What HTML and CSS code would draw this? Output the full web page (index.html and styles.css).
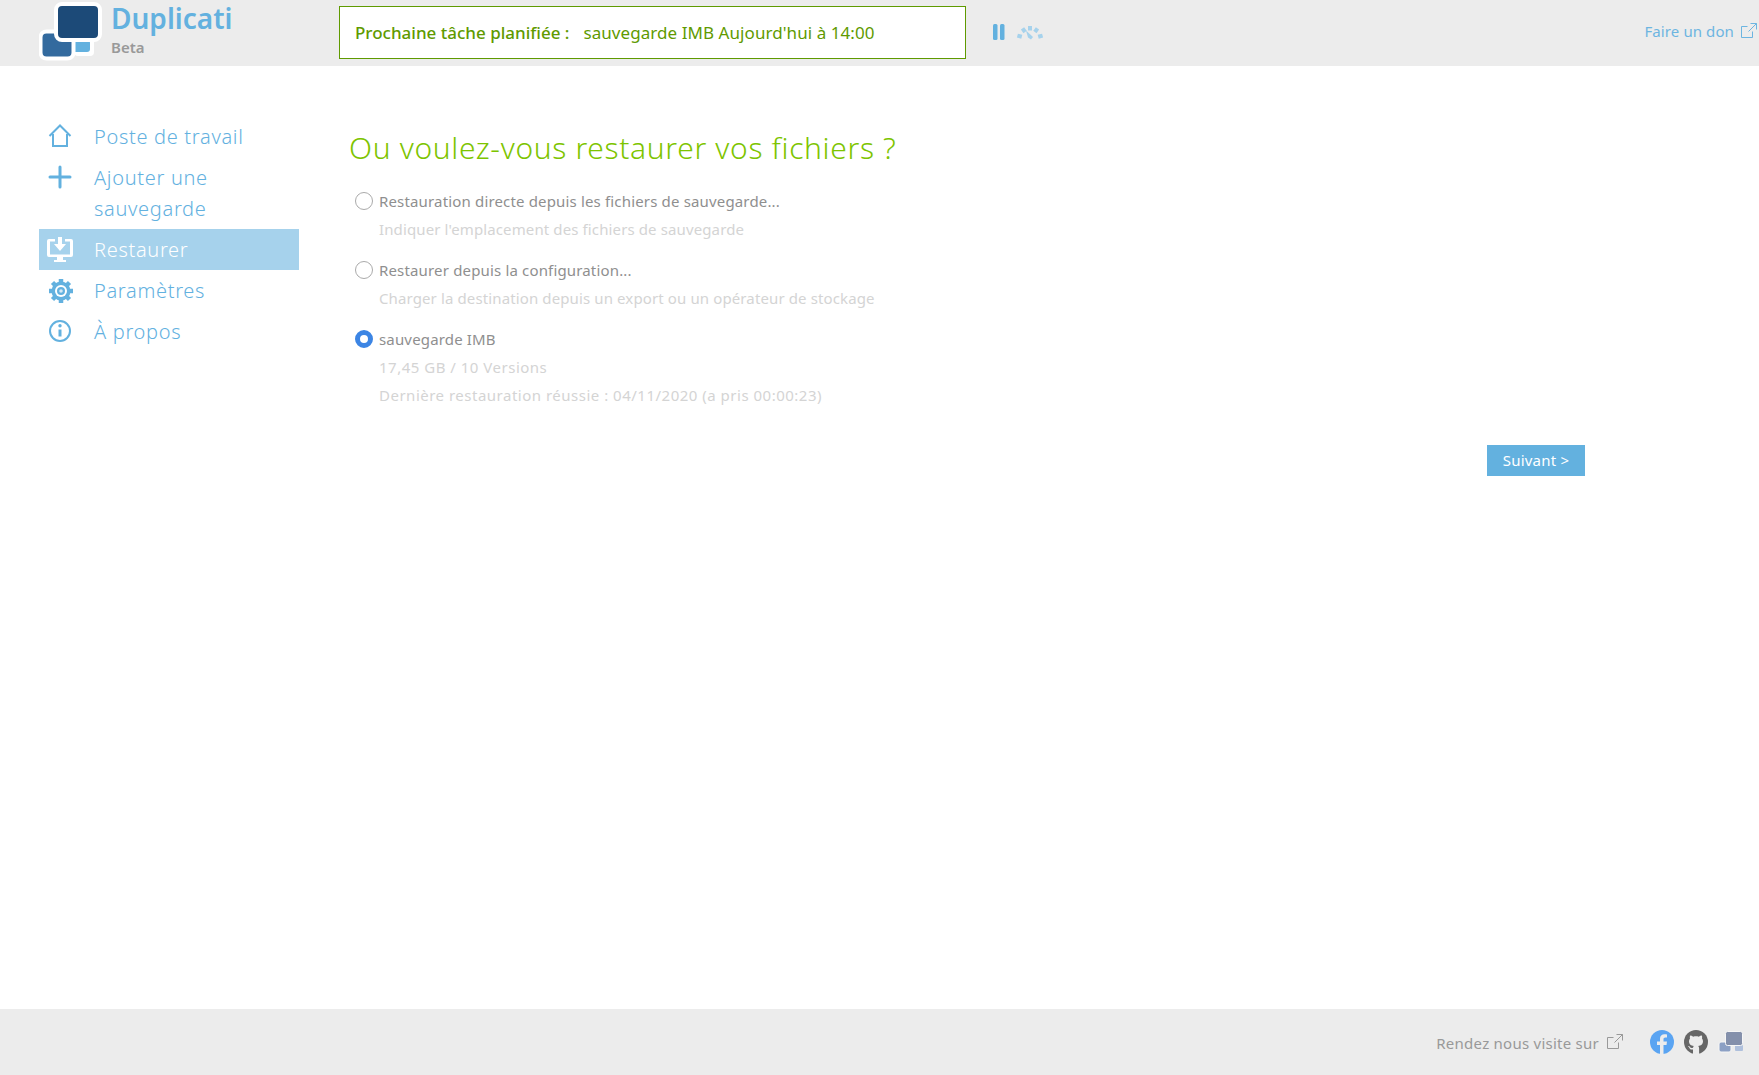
FILE: index.html
```html
<!DOCTYPE html>
<html lang="fr">
<head>
  <meta charset="UTF-8">
  <title>Duplicati</title>
  <link rel="stylesheet" href="styles.css">
</head>
<body>
  <header class="header">
    <div class="logo">
      <svg class="logo-mark" width="70" height="66" viewBox="0 0 70 66">
        <rect x="35" y="38" width="20" height="18" rx="4" fill="#fff"/>
        <rect x="33" y="40" width="18" height="12" rx="3" fill="#63b1df"/>
        <rect x="1.500" y="31.500" width="33" height="27" rx="6" fill="#336a9e" stroke="#fff" stroke-width="4"/>
        <rect x="17" y="4" width="44" height="36" rx="6" fill="#1c4a78" stroke="#fff" stroke-width="4"/>
      </svg>
      <div class="logo-text">
        <div class="logo-name">Duplicati</div>
        <div class="logo-beta">Beta</div>
      </div>
    </div>
    <div class="next-task">
      <span class="next-label">Prochaine tâche planifiée :</span>
      <span class="next-value">sauvegarde IMB Aujourd'hui à 14:00</span>
    </div>
    <div class="controls">
      <svg width="14" height="18" viewBox="0 0 14 18"><rect x="1" y="1" width="4.500" height="16" rx="1.500" fill="#63b1df"/><rect x="8" y="1" width="4.500" height="16" rx="1.500" fill="#63b1df"/></svg>
      <svg width="28" height="16" viewBox="0 0 28 16" fill="none">
        <path d="M5.800 12.800L1.400 11.600M9.100 8L6.500 4.400M14 6.500V2M18.900 8l2.600-3.600M22.200 12.800l4.400-1.200" stroke="#a6d2ec" stroke-width="4"/>
        <path d="M10 6.500l7 6.500-2 2.500-3-2z" fill="#a6d2ec"/>
      </svg>
    </div>
    <a class="donate">Faire un don
      <svg class="ext" width="16" height="16" viewBox="0 0 16 16" fill="none" stroke="currentColor"><path d="M11.500 8.500v6h-11v-11h6M9.500.5h6v6M15.500.5l-8 8"/></svg>
    </a>
  </header>

  <div class="main">
    <nav class="menu">
      <a class="menu-item">
        <svg class="menu-icon" width="24" height="24" viewBox="0 0 24 24" fill="none" stroke="#63b1df" stroke-width="2"><path d="M1.500 12L12 1.500 22.500 12M5 10v12h14V10"/></svg>
        <span>Poste de travail</span>
      </a>
      <a class="menu-item">
        <svg class="menu-icon" width="24" height="24" viewBox="0 0 24 24" fill="none" stroke="#63b1df" stroke-width="3" stroke-linecap="round"><path d="M2 12h20M12 2v20"/></svg>
        <span>Ajouter une sauvegarde</span>
      </a>
      <a class="menu-item active">
        <svg class="menu-icon monitor" width="28" height="26" viewBox="0 0 28 26" fill="#fff"><path d="M3 2h6v2.500H4v13h20v-13h-5V2h6a2 2 0 0 1 2 2v14a2 2 0 0 1-2 2H3a2 2 0 0 1-2-2V4a2 2 0 0 1 2-2z"/><path d="M12 0h4v7h4l-6 7-6-7h4z"/><path d="M11 20h6v3h3v2H8v-2h3z"/></svg>
        <span>Restaurer</span>
      </a>
      <a class="menu-item">
        <svg class="menu-icon" width="26" height="26" viewBox="0 0 26 26">
          <g stroke="#63b1df" stroke-width="4.500">
            <path d="M13 1v24M1 13h24M4.500 4.500l17 17M21.500 4.500l-17 17"/>
          </g>
          <circle cx="13" cy="13" r="9.500" fill="#63b1df"/>
          <circle cx="13" cy="13" r="6" fill="#fff"/>
          <circle cx="13" cy="13" r="4" fill="#63b1df"/>
          <circle cx="13" cy="13" r="1.800" fill="#d4e9f6"/>
        </svg>
        <span>Paramètres</span>
      </a>
      <a class="menu-item">
        <svg class="menu-icon" width="24" height="24" viewBox="0 0 24 24" fill="none" stroke="#63b1df" stroke-width="2"><circle cx="12" cy="12" r="10"/><path d="M12 10.500v7" stroke-width="3"/><circle cx="12" cy="6.800" r="1.700" fill="#63b1df" stroke="none"/></svg>
        <span>À propos</span>
      </a>
    </nav>

    <section class="content">
      <h1 class="title">Ou voulez-vous restaurer vos fichiers ?</h1>

      <div class="option">
        <div class="option-head"><span class="radio"></span>Restauration directe depuis les fichiers de sauvegarde...</div>
        <div class="option-sub">Indiquer l'emplacement des fichiers de sauvegarde</div>
      </div>
      <div class="option">
        <div class="option-head"><span class="radio"></span>Restaurer depuis la configuration...</div>
        <div class="option-sub">Charger la destination depuis un export ou un opérateur de stockage</div>
      </div>
      <div class="option">
        <div class="option-head"><span class="radio checked"></span>sauvegarde IMB</div>
        <div class="option-sub numeric">17,45 GB / 10 Versions</div>
        <div class="option-sub numeric">Dernière restauration réussie : 04/11/2020 (a pris 00:00:23)</div>
      </div>

      <div class="actions"><button class="next-btn">Suivant &gt;</button></div>
    </section>
  </div>

  <footer class="footer">
    <span class="visit">Rendez nous visite sur</span>
    <svg class="ext" width="16" height="16" viewBox="0 0 16 16" fill="none" stroke="currentColor"><path d="M11.500 8.500v6h-11v-11h6M9.500.5h6v6M15.500.5l-8 8"/></svg>
    <div class="social">
      <svg width="24" height="24" viewBox="0 0 24 24"><circle cx="12" cy="12" r="12" fill="#5aa4f2"/><path d="M13.500 24v-9h3l.5-3.500h-3.500V9.300c0-1 .5-1.800 1.900-1.800H17V4.400c-.6-.1-1.500-.2-2.500-.2-2.700 0-4.500 1.600-4.500 4.600v2.700H7V15h3v9z" fill="#ececec"/></svg>
      <svg width="24" height="24" viewBox="0 0 24 24"><circle cx="12" cy="12" r="12" fill="#666"/><path d="M9 24v-4.500c-2.500.5-3.300-.6-3.800-2-.3-.7-.8-1-1.200-1.300.8-.3 1.600.2 2.100 1 .6.900 1.600 1 2.900.5.100-.8.400-1.300.8-1.700-2.700-.4-4.800-1.600-4.800-4.800 0-1.100.4-2.100 1-2.800-.2-.6-.3-1.700.2-2.900 1 0 2 .5 3 1.200 1.800-.5 3.800-.5 5.600 0 1-.7 2-1.200 3-1.200.5 1.200.4 2.300.2 2.900.6.700 1 1.700 1 2.800 0 3.200-2.100 4.400-4.800 4.800.6.500.9 1.300.9 2.400V24z" fill="#ececec"/></svg>
      <svg width="26" height="24" viewBox="0 0 26 24">
        <rect x="17" y="15" width="8" height="6" rx="1" fill="#afc0dc"/>
        <rect x="1" y="12" width="12" height="10" rx="2" fill="#8ca0c4" stroke="#f6f6f6"/>
        <rect x="7.500" y="1.500" width="17" height="14" rx="2" fill="#8490ab" stroke="#f6f6f6"/>
      </svg>
    </div>
  </footer>
</body>
</html>
```

FILE: styles.css
```css
html, body {
  height: 100%;
}
body {
  margin: 0;
  display: flex;
  flex-direction: column;
  font-family: "Noto Sans", sans-serif;
  color: #8f8f8f;
  background: #fff;
}
.header {
  height: 66px;
  flex: none;
  display: flex;
  align-items: center;
  background: #ececec;
  padding-left: 39px;
}
.logo {
  width: 300px;
  display: flex;
  height: 66px;
}
.logo-mark {
  flex: none;
}
.logo-text {
  margin-left: 2px;
}
.logo-name {
  font-size: 28px;
  line-height: 36px;
  font-weight: 600;
  color: #63b1df;
}
.logo-beta {
  font-size: 15px;
  line-height: 22px;
  font-weight: 600;
  color: #999;
}
.next-task {
  width: 627px;
  height: 53px;
  margin-bottom: 1px;
  box-sizing: border-box;
  display: flex;
  align-items: center;
  gap: 14px;
  padding-left: 15px;
  border: 1px solid #5f9a00;
  background: #fff;
  color: #5f9a00;
  font-size: 17px;
}
.next-label {
  font-weight: 500;
}
.next-value {
  letter-spacing: .06px;
}
.controls {
  display: flex;
  align-items: center;
  gap: 10px;
  margin: 0 0 2px 26px;
}
.donate {
  margin-left: auto;
  margin-right: 2px;
  padding-bottom: 4px;
  color: #6cb5e1;
  font-size: 15px;
  letter-spacing: .1px;
  display: flex;
  align-items: center;
  gap: 7px;
}
.main {
  flex: 1;
  display: flex;
  padding: 50px 0 0 39px;
}
.menu {
  width: 260px;
  flex: none;
}
.menu-item {
  display: flex;
  align-items: flex-start;
  padding: 5px 0 5px 55px;
  position: relative;
  font-size: 20px;
  line-height: 31px;
  font-weight: 300;
  letter-spacing: .68px;
  color: #63b1df;
}
.menu-item.active {
  background: #a6d2ec;
  color: #fff;
}
.menu-icon {
  position: absolute;
  left: 9px;
  top: 8px;
}
.menu-icon.monitor {
  left: 7px;
}
.content {
  width: 1236px;
  margin-left: 50px;
}
.title {
  margin: 10px 0 17px;
  font-size: 30px;
  line-height: 44px;
  font-weight: 300;
  letter-spacing: .65px;
  color: #7dc400;
}
.option {
  margin-bottom: 13px;
  padding-left: 30px;
  font-size: 15px;
  line-height: 28px;
}
.option-head {
  position: relative;
  letter-spacing: .16px;
}
.option-sub {
  color: #d4d4d4;
  letter-spacing: .12px;
}
.option-sub.numeric {
  letter-spacing: .5px;
}
.radio {
  position: absolute;
  left: -24px;
  top: 5px;
  width: 16px;
  height: 16px;
  border: 1px solid #aaa;
  border-radius: 50%;
  background: #fff;
}
.radio.checked {
  width: 8px;
  height: 8px;
  border: 5px solid #3c85e4;
}
.actions {
  display: flex;
  justify-content: flex-end;
  margin-top: 36px;
}
.next-btn {
  width: 98px;
  height: 31px;
  padding-bottom: 3px;
  border: none;
  background: #63b1df;
  color: #fff;
  font-family: inherit;
  font-size: 15px;
  letter-spacing: .2px;
}
.footer {
  height: 66px;
  flex: none;
  display: flex;
  align-items: center;
  justify-content: flex-end;
  gap: 8px;
  padding-right: 15px;
  background: #ececec;
  font-size: 15px;
  color: #999;
}
.visit {
  letter-spacing: .25px;
  padding-top: 2px;
}
.social {
  display: flex;
  align-items: center;
  gap: 10px;
  margin-left: 19px;
}
```
